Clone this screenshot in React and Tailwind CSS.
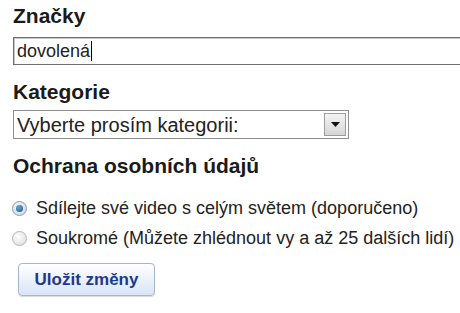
import React from "react";

const font = { fontFamily: '"Liberation Sans", Arial, sans-serif' };

const Heading = ({ children, className = "" }) => (
  <div className={`text-[21px] font-bold leading-[24px] text-[#1a1a1a] ${className}`}>
    {children}
  </div>
);

const Radio = ({ checked, label }) => (
  <label className="flex h-[30px] items-center gap-[9px]">
    <span
      className={
        checked
          ? "flex h-[15px] w-[15px] items-center justify-center rounded-full border border-[#8a9bb0] bg-[radial-gradient(circle_at_40%_35%,#f4f7fb,#c9d3df)]"
          : "h-[15px] w-[15px] rounded-full border border-[#b5b5b5] bg-[radial-gradient(circle_at_40%_35%,#ffffff,#d9d9d9)]"
      }
    >
      {checked && (
        <span className="h-[7px] w-[7px] rounded-full bg-[radial-gradient(circle_at_40%_35%,#6aa5d8,#1d4f86)]" />
      )}
    </span>
    <span className="text-[18px] leading-[20px] text-[#222]">{label}</span>
  </label>
);

export default function App() {
  const [privacy, setPrivacy] = React.useState("public");

  return (
    <div className="h-[313px] w-[460px] overflow-hidden bg-white" style={font}>
      <div className="pl-[13px] pt-[4px]">
        <Heading>Značky</Heading>

        <div className="mt-[9px] flex h-[28px] items-center border border-[#6f6f6f] border-r-0 pl-[3px] shadow-[inset_1px_1px_0_#c8c8c8]">
          <span className="text-[18px] leading-[20px] text-[#222]">dovolená</span>
          <span className="ml-[1px] h-[20px] w-[1px] bg-black" />
        </div>

        <Heading className="mt-[15px]">Kategorie</Heading>

        <div className="mt-[6px] flex h-[29px] w-[336px] items-center justify-between border border-[#8c8c8c] bg-white pl-[3px] pr-[2px]">
          <span className="text-[20px] leading-[22px] text-[#222]">Vyberte prosím kategorii:</span>
          <span className="flex h-[23px] w-[22px] items-center justify-center border border-[#9c9c9c] bg-gradient-to-b from-[#f4f4f4] to-[#d6d6d6]">
            <svg width="9" height="5" viewBox="0 0 9 5">
              <path d="M0 0h9L4.5 5z" fill="#111" />
            </svg>
          </span>
        </div>

        <Heading className="mt-[15px]">Ochrana osobních údajů</Heading>

        <div className="mt-[15px] flex flex-col">
          <div onClick={() => setPrivacy("public")} className="-ml-[1px]">
            <Radio checked={privacy === "public"} label="Sdílejte své video s celým světem (doporučeno)" />
          </div>
          <div onClick={() => setPrivacy("private")} className="-ml-[1px]">
            <Radio checked={privacy === "private"} label="Soukromé (Můžete zhlédnout vy a až 25 dalších lidí)" />
          </div>
        </div>

        <button className="ml-[5px] mt-[10px] h-[33px] w-[137px] rounded-[4px] border border-[#a7b5d0] bg-gradient-to-b from-[#ffffff] to-[#d9e4f7] text-[17px] font-bold text-[#1d3a8c] shadow-[0_1px_1px_rgba(0,0,0,0.15)]">
          Uložit změny
        </button>
      </div>
    </div>
  );
}
